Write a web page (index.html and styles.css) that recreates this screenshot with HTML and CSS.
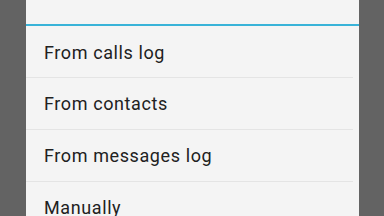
FILE: index.html
```html
<!DOCTYPE html>
<html lang="en">
<head>
    <meta charset="UTF-8">
    <title>Add number</title>
    <link rel="stylesheet" href="styles.css">
</head>
<body>
    <div class="dialog">
        <div class="dialog-title"></div>
        <ul class="option-list">
            <li class="option-item">From calls log</li>
            <li class="option-item">From contacts</li>
            <li class="option-item">From messages log</li>
            <li class="option-item">Manually</li>
        </ul>
    </div>
</body>
</html>
```

FILE: styles.css
```css
body {
    margin: 0;
    background-color: #636363;
    font-family: Roboto, "Noto Sans", sans-serif;
    color: #212121;
    overflow: hidden;
    height: 216px;
}

/* ダイアログ本体 */
.dialog {
    width: 333px;
    margin-left: 26px;
    height: 216px;
    background-color: #f4f4f4;
}
.dialog-title {
    height: 24px;
    border-bottom: 2px solid #39b3d8;
}

/* 選択肢リスト */
.option-list {
    list-style: none;
    margin: 0;
    padding: 0;
}
.option-item {
    height: 51px;
    line-height: 51px;
    padding-left: 18px;
    margin-right: 6px;
    font-size: 18px;
    letter-spacing: 0.6px;
    border-bottom: 1px solid #e4e4e4;
}
.option-item:first-child {
    line-height: 53px;
}
```
